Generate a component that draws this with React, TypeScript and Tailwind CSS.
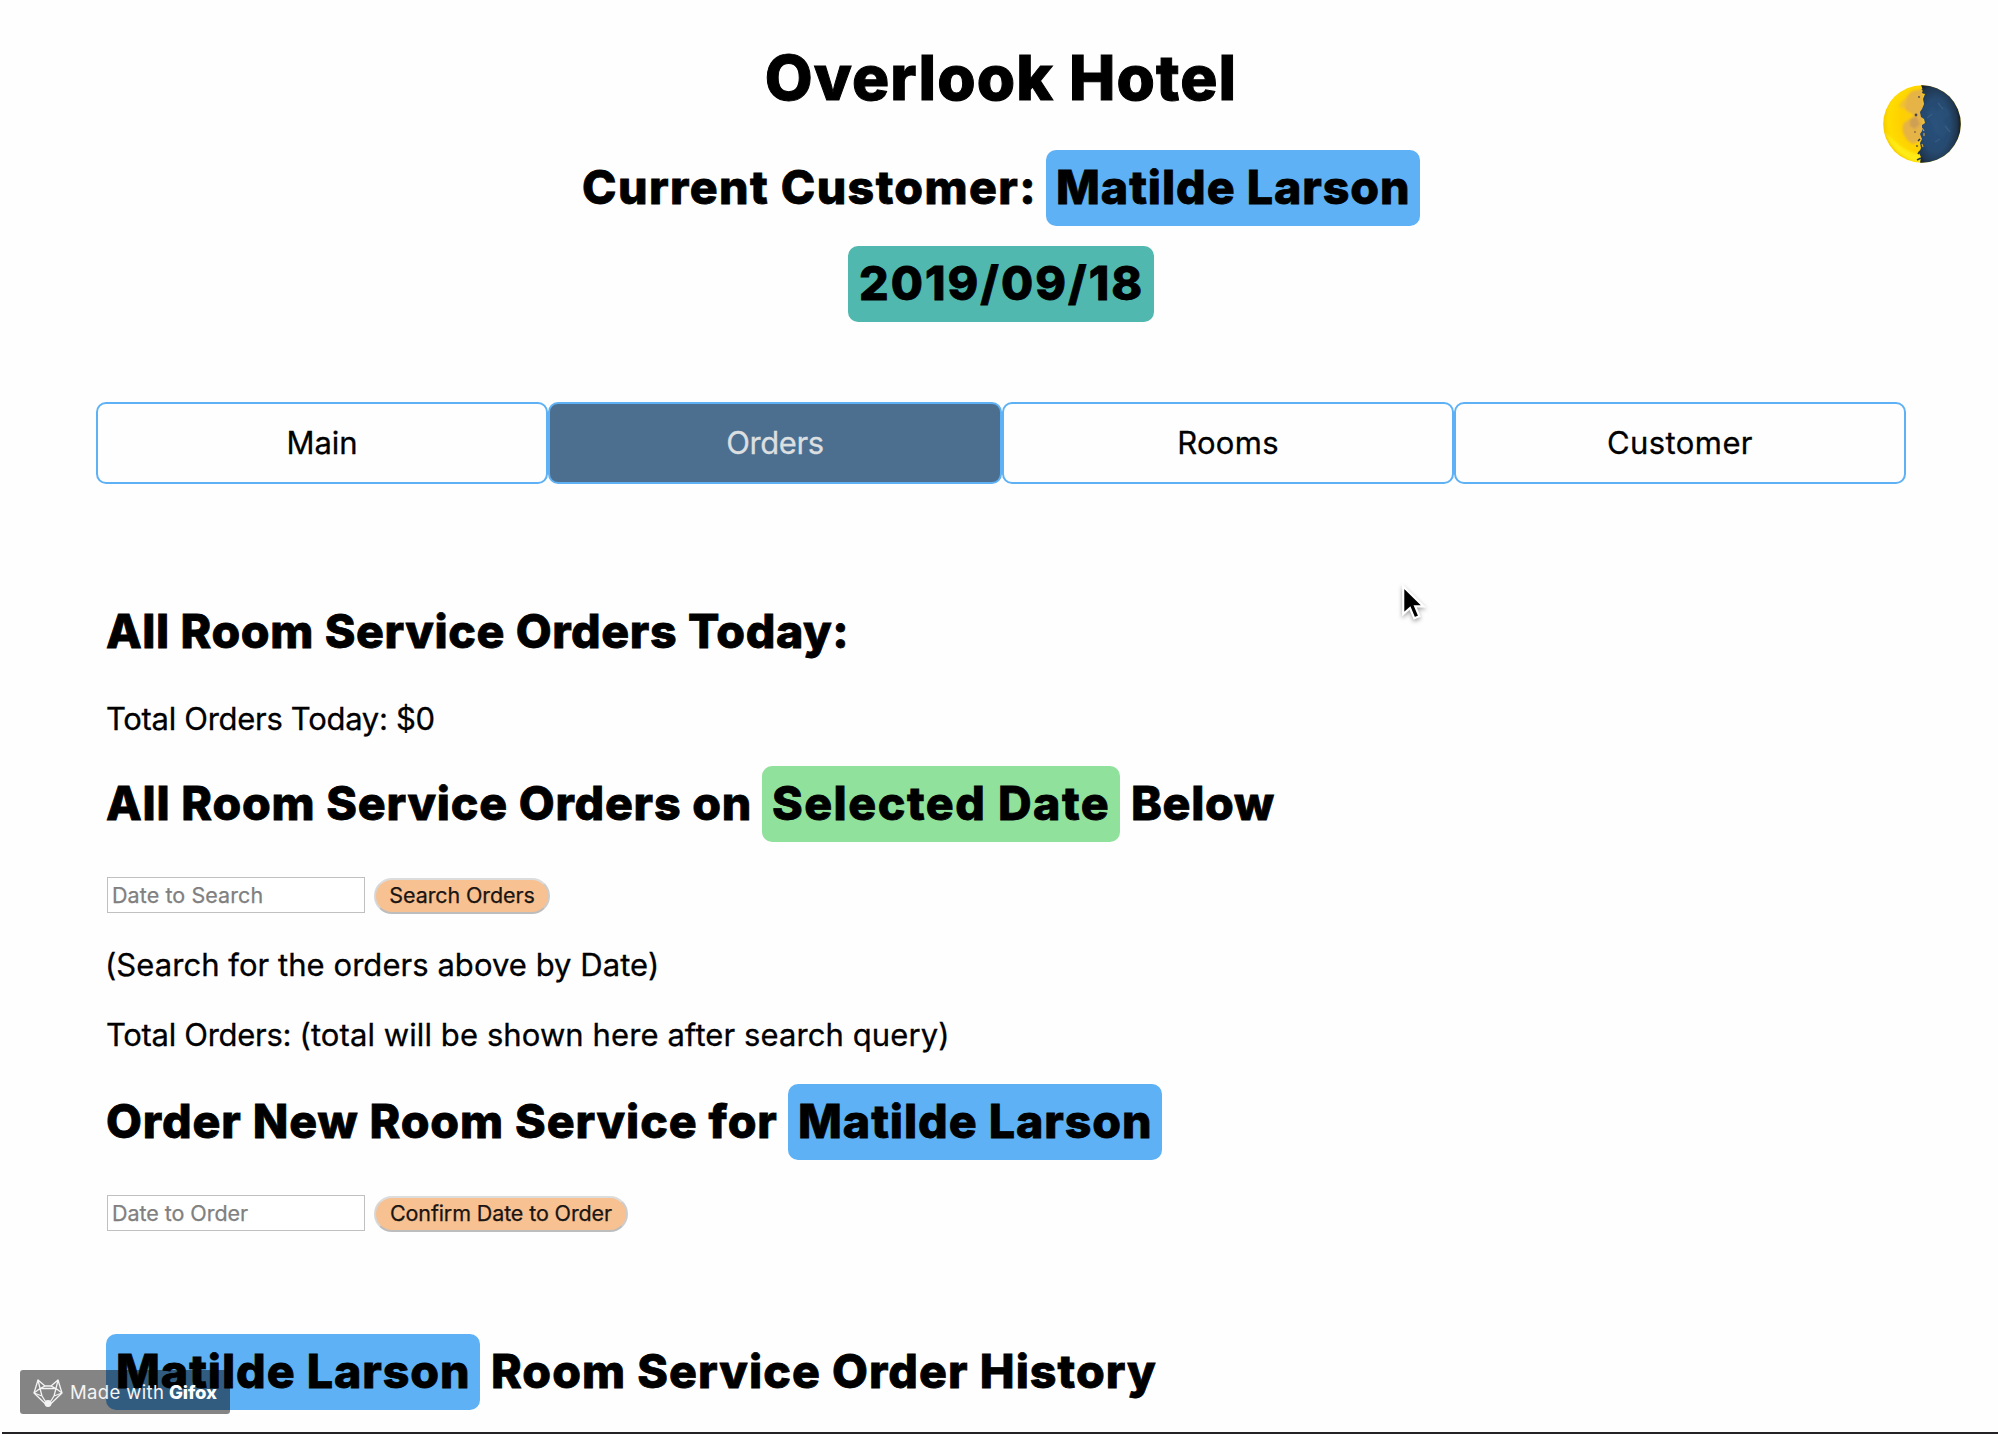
import type { ReactNode } from "react";

function Pill({ className, children }: { className: string; children: ReactNode }) {
  return (
    <span className={`block h-[76px] shrink-0 rounded-[10px] leading-[74px] ${className}`}>{children}</span>
  );
}

function Heading({ className = "", children }: { className?: string; children: ReactNode }) {
  return (
    <h2
      className={`flex h-[76px] text-[46.5px] leading-[74px] font-extrabold whitespace-nowrap [-webkit-text-stroke:0.8px_black] ${className}`}
    >
      {children}
    </h2>
  );
}

function Paragraph({ className, children }: { className: string; children: ReactNode }) {
  return (
    <p className={`h-[40px] text-[31px] leading-[40px] whitespace-nowrap [-webkit-text-stroke:0.3px_black] ${className}`}>
      {children}
    </p>
  );
}

function Field({ placeholder, className }: { placeholder: string; className: string }) {
  return (
    <input
      placeholder={placeholder}
      className={`ml-[1px] h-[36px] w-[258px] border border-[#c0c0c0] bg-white pb-[1px] pl-[4px] text-[21.5px] outline-none [-webkit-text-stroke:0.25px_#808080] placeholder:text-[#808080] ${className}`}
    />
  );
}

function ActionButton({ className, children }: { className: string; children: ReactNode }) {
  return (
    <button
      className={`mt-[1px] ml-[9px] h-[36px] rounded-[18px] border-2 border-t-[#dcdcdc] border-r-[#cccccc] border-b-[#bdbdbd] border-l-[#d6d6d6] bg-[#f7c192] pb-[2px] text-[21.5px] leading-[30px] whitespace-nowrap text-[#1a1512] [-webkit-text-stroke:0.25px_#1a1512] ${className}`}
    >
      {children}
    </button>
  );
}

function Moon() {
  return (
    <svg viewBox="0 0 78 78" className="absolute top-[85px] left-[1883px] h-[78px] w-[78px]">
      <defs>
        <clipPath id="disc">
          <circle cx="39" cy="39" r="38.8" />
        </clipPath>
        <radialGradient id="lit" cx="0.62" cy="0.45" r="0.65">
          <stop offset="0" stopColor="#f5c42a" />
          <stop offset="0.6" stopColor="#ffd000" />
          <stop offset="0.85" stopColor="#ffdc00" />
          <stop offset="1" stopColor="#f2c200" />
        </radialGradient>
        <radialGradient id="dark" cx="0.4" cy="0.52" r="0.62">
          <stop offset="0" stopColor="#28507c" />
          <stop offset="0.55" stopColor="#264a70" />
          <stop offset="0.82" stopColor="#20364e" />
          <stop offset="1" stopColor="#0f161e" />
        </radialGradient>
        <filter id="soft">
          <feGaussianBlur stdDeviation="1.2" />
        </filter>
      </defs>
      <g clipPath="url(#disc)">
        <rect width="78" height="78" fill="url(#lit)" />
        <path d="M2 46C6 62 20 75 38 78L38 70C24 68 12 58 2 46Z" fill="#fff01a" opacity="0.75" filter="url(#soft)" />
        <g filter="url(#soft)">
          <path d="M29 6C24 10 20 17 22 24C25 28 29 27 31 31C28 36 23 34 20 40C18 47 23 56 30 59L40 54V4Z" fill="#e3b04c" opacity="0.9" />
          <path d="M18 17L22 14L24 18L20 24L16 22Z" fill="#edbd3c" opacity="0.8" />
          <path d="M27 34L33 31L37 39L32 44L27 41Z" fill="#c99a58" opacity="0.8" />
        </g>
        <path
          d="M38 0L40 5L39 8L42 9L40 14L41 19L39 24L37 27L38 32L41 34L42 38L39 40L39 46L37 49L39 54L37 58L38 63L36 68L38 72L37 78H78V0Z"
          fill="url(#dark)"
        />
        <path
          d="M43 27L49 22L54 26L62 21L68 30L60 36L67 43L60 54L52 47L48 37Z"
          fill="#2f587e"
          opacity="0.35"
          filter="url(#soft)"
        />
        <path d="M44 33L49 29M55 18L60 24M62 41L67 47M52 57L57 54" stroke="#486d91" strokeWidth="1.2" opacity="0.5" />
        <path d="M39 4L42 6L40 8M37 54L35 56M37 66L35 69M38 73L34 75" stroke="#263747" strokeWidth="1.6" fill="none" />
        <g fill="#4f4a46">
          <circle cx="33" cy="30" r="1.4" />
          <circle cx="36" cy="12" r="0.9" />
          <circle cx="32" cy="47" r="0.8" />
          <circle cx="34" cy="61" r="0.9" />
        </g>
        <path d="M39 43L41 46M39 59L40 62M41 48V51" stroke="#c9a34e" strokeWidth="1.2" />
      </g>
    </svg>
  );
}

function Pointer() {
  return (
    <svg
      viewBox="0 0 32 42"
      className="absolute top-[583px] left-[1399px] h-[42px] w-[32px] drop-shadow-[0_2px_2px_rgba(0,0,0,0.35)]"
    >
      <path
        d="M4.2 3.5V31L11 25L15.3 35.3L20.4 33.2L16.2 23.4H24.6Z"
        fill="#000"
        stroke="#fff"
        strokeWidth="2.2"
        strokeLinejoin="miter"
      />
    </svg>
  );
}

function GifoxBadge() {
  return (
    <div className="absolute top-[1370px] left-[20px] flex h-[44px] w-[210px] items-center rounded-[3px] bg-black/48 pl-[13px] text-[18.5px] leading-[42px] whitespace-nowrap text-[#f4f4f4]">
      <svg
        viewBox="0 0 30 28"
        className="mt-[1px] h-[28px] w-[30px] shrink-0 overflow-visible"
        fill="none"
        stroke="#f4f4f4"
        strokeWidth="1.3"
        strokeLinejoin="round"
      >
        <path d="M5 1L1 14L13.5 26L15 27L16.5 26L29 14L25 1L18 7H12Z" />
        <path d="M5 1L7 9.5L1 14M25 1L23 9.5L29 14M12 7L7 9.5L9 17L14 25M18 7L23 9.5L21 17L16 25M1 14L9 17M29 14L21 17M7 9.5H23" />
        <circle cx="15" cy="24.5" r="2.8" fill="#f4f4f4" />
      </svg>
      <span className="ml-[7px] w-[99px] tracking-[0.35px]">Made with</span>
      <span className="font-extrabold tracking-[-0.1px] text-white">Gifox</span>
    </div>
  );
}

const tabs = [
  { label: "Main", style: "[-webkit-text-stroke:0.3px_black]" },
  { label: "Orders", style: "bg-[#4c6f90] text-[#dcdfe0] tracking-[-0.4px] [-webkit-text-stroke:0.3px_#dcdfe0]" },
  { label: "Rooms", style: "tracking-[0.3px] [-webkit-text-stroke:0.3px_black]" },
  { label: "Customer", style: "tracking-[0.4px] [-webkit-text-stroke:0.3px_black]" },
];

export default function App() {
  return (
    <div className="relative h-[1434px] w-[1998px] overflow-hidden bg-[#fefefe] font-['Inter',sans-serif] text-black">
      <div className="mr-[92px] ml-[96px]">
        <header className="flex flex-col items-center pt-[46px]">
          <h1 className="h-[104px] text-[62px] leading-[63px] font-extrabold tracking-[1.15px] [-webkit-text-stroke:1px_black]">
            Overlook Hotel
          </h1>
          <Heading>
            <span className="w-[464px] tracking-[1.4px]">Current Customer:</span>
            <Pill className="w-[374px] bg-[#5eb1f5] pl-[10px] tracking-[0.95px]">Matilde Larson</Pill>
          </Heading>
          <Heading className="mt-[20px]">
            <Pill className="w-[306px] bg-[#50b8ae] pl-[11px] tracking-[2.05px]">2019/09/18</Pill>
          </Heading>
        </header>

        <nav className="mt-[80px] grid h-[82px] grid-cols-[452px_454px_452px_452px]">
          {tabs.map((tab) => (
            <button
              key={tab.label}
              className={`rounded-[10px] border-2 border-[#5eb1f5] text-[31px] leading-[78px] ${tab.style}`}
            >
              {tab.label}
            </button>
          ))}
        </nav>

        <main className="mt-[110px] ml-[10px]">
          <Heading>
            <span className="tracking-[0.58px]">All Room Service Orders Today:</span>
          </Heading>
          <Paragraph className="mt-[29px] tracking-[-0.3px]">Total Orders Today: $0</Paragraph>

          <Heading className="mt-[27px]">
            <span className="w-[656px] tracking-[0.76px]">All Room Service Orders on</span>
            <Pill className="w-[358px] bg-[#90e19c] pl-[10px] tracking-[1.5px]">Selected Date</Pill>
            <span className="ml-[11px] tracking-[0.69px]">Below</span>
          </Heading>
          <form className="mt-[35px] flex h-[37px]">
            <Field placeholder="Date to Search" className="tracking-[0.08px]" />
            <ActionButton className="w-[176px] tracking-[-0.11px]">Search Orders</ActionButton>
          </form>
          <Paragraph className="mt-[31px] -ml-[1px] tracking-[0.05px]">(Search for the orders above by Date)</Paragraph>
          <Paragraph className="mt-[30px] tracking-[0.09px]">
            <span className="tracking-[-0.3px]">Total Orders: </span>
            (total will be shown here after search query)
          </Paragraph>

          <Heading className="mt-[29px]">
            <span className="w-[682px] tracking-[0.88px]">Order New Room Service for</span>
            <Pill className="w-[374px] bg-[#5eb1f5] pl-[10px] tracking-[0.95px]">Matilde Larson</Pill>
          </Heading>
          <form className="mt-[35px] flex h-[37px]">
            <Field placeholder="Date to Order" className="tracking-[-0.05px]" />
            <ActionButton className="w-[254px] tracking-[-0.12px]">Confirm Date to Order</ActionButton>
          </form>

          <Heading className="mt-[102px]">
            <Pill className="w-[374px] bg-[#5eb1f5] pl-[10px] tracking-[0.95px]">Matilde Larson</Pill>
            <span className="ml-[11px] tracking-[1.04px]">Room Service Order History</span>
          </Heading>
        </main>
      </div>

      <Moon />
      <Pointer />
      <GifoxBadge />
      <div className="absolute right-0 bottom-0 left-[2px] h-[2px] bg-[#242225]" />
    </div>
  );
}
